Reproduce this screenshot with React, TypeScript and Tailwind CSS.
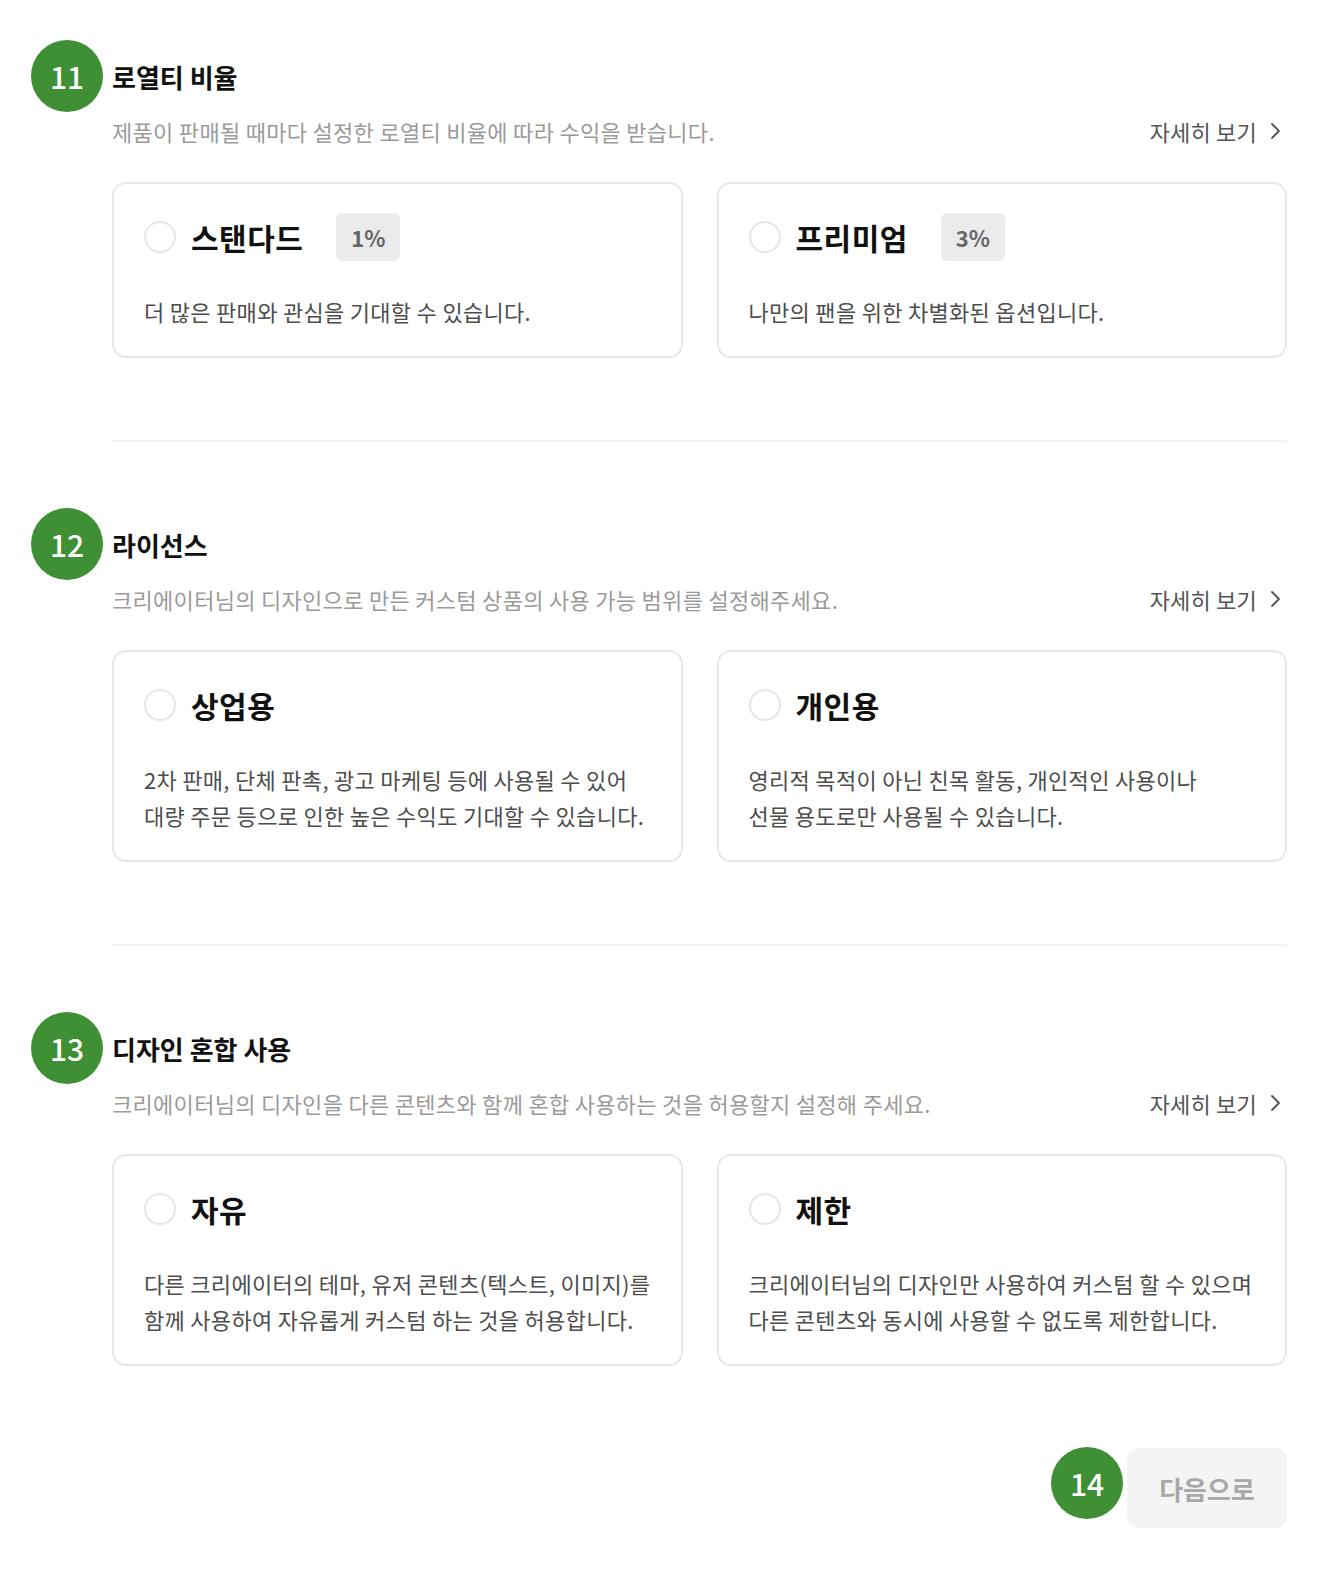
import React, { useState } from 'react';

type Option = {
  id: string;
  title: string;
  badge?: string;
  desc: string[];
};

type Section = {
  no: number;
  title: string;
  subtitle: string;
  options: Option[];
};

const sections: Section[] = [
  {
    no: 11,
    title: '로열티 비율',
    subtitle: '제품이 판매될 때마다 설정한 로열티 비율에 따라 수익을 받습니다.',
    options: [
      { id: 'standard', title: '스탠다드', badge: '1%', desc: ['더 많은 판매와 관심을 기대할 수 있습니다.'] },
      { id: 'premium', title: '프리미엄', badge: '3%', desc: ['나만의 팬을 위한 차별화된 옵션입니다.'] },
    ],
  },
  {
    no: 12,
    title: '라이선스',
    subtitle: '크리에이터님의 디자인으로 만든 커스텀 상품의 사용 가능 범위를 설정해주세요.',
    options: [
      {
        id: 'commercial',
        title: '상업용',
        desc: ['2차 판매, 단체 판촉, 광고 마케팅 등에 사용될 수 있어', '대량 주문 등으로 인한 높은 수익도 기대할 수 있습니다.'],
      },
      {
        id: 'personal',
        title: '개인용',
        desc: ['영리적 목적이 아닌 친목 활동, 개인적인 사용이나', '선물 용도로만 사용될 수 있습니다.'],
      },
    ],
  },
  {
    no: 13,
    title: '디자인 혼합 사용',
    subtitle: '크리에이터님의 디자인을 다른 콘텐츠와 함께 혼합 사용하는 것을 허용할지 설정해 주세요.',
    options: [
      {
        id: 'free',
        title: '자유',
        desc: ['다른 크리에이터의 테마, 유저 콘텐츠(텍스트, 이미지)를', '함께 사용하여 자유롭게 커스텀 하는 것을 허용합니다.'],
      },
      {
        id: 'limited',
        title: '제한',
        desc: ['크리에이터님의 디자인만 사용하여 커스텀 할 수 있으며', '다른 콘텐츠와 동시에 사용할 수 없도록 제한합니다.'],
      },
    ],
  },
];

function StepBadge({ no }: { no: number }) {
  return (
    <div className="flex h-[72px] w-[72px] items-center justify-center rounded-full bg-[#3f8f35] text-[30px] font-medium text-white">
      {no}
    </div>
  );
}

function OptionCard({ option, selected, onSelect }: { option: Option; selected: boolean; onSelect: () => void }) {
  return (
    <button
      type="button"
      onClick={onSelect}
      className="rounded-[14px] border-2 border-[#e8e8e8] bg-white px-[30px] pt-[29px] pb-[27px] text-left"
    >
      <div className="flex h-[48px] items-center">
        <span
          className={
            selected
              ? 'h-[32px] w-[32px] rounded-full border-[9px] border-[#3f8f35]'
              : 'h-[32px] w-[32px] rounded-full border-2 border-[#e6e6e6]'
          }
        />
        <span className="ml-[15px] text-[30px] font-bold tracking-[0.5px] text-[#111]">{option.title}</span>
        {option.badge && (
          <span className="ml-[33px] flex h-[48px] w-[64px] items-center justify-center rounded-[6px] bg-[#ebebeb] text-[22px] font-semibold text-[#666]">
            {option.badge}
          </span>
        )}
      </div>
      <div className="mt-[32px] text-[22px] leading-[36px] tracking-[0.3px] text-[#4d4d4d]">
        {option.desc.map((line) => (
          <p key={line}>{line}</p>
        ))}
      </div>
    </button>
  );
}

export default function App() {
  const [picked, setPicked] = useState<Record<number, string>>({});

  return (
    <div className="min-h-screen bg-white pl-[112px] pr-[41px] pt-[58px] pb-[44px] font-['Noto_Sans_CJK_KR','Noto_Sans',sans-serif]">
      {sections.map((section, i) => (
        <section key={section.no}>
          {i > 0 && <div className="mt-[82px] mb-[84px] h-[2px] bg-[#f2f2f2]" />}

          {/* title */}
          <div className="relative flex h-[36px] items-center">
            <div className="absolute left-[-81px] top-1/2 -translate-y-1/2">
              <StepBadge no={section.no} />
            </div>
            <h2 className="text-[26px] font-bold text-[#111]">{section.title}</h2>
          </div>

          <div className="mt-[23px] flex h-[28px] items-center justify-between">
            <p className="text-[22px] tracking-[0.3px] text-[#9a9a9a]">{section.subtitle}</p>
            <a href="#" className="flex items-center gap-[13px] text-[22px] tracking-[0.2px] text-[#555]">
              <span>자세히 보기</span>
              <svg width="12" height="20" viewBox="0 0 12 20" fill="none" className="mr-[5px]">
                <path d="M2 3l7 7-7 7" stroke="#555" strokeWidth="1.8" strokeLinecap="round" strokeLinejoin="round" />
              </svg>
            </a>
          </div>

          <div className="mt-[37px] grid grid-cols-2 gap-[34px]">
            {section.options.map((opt) => (
              <OptionCard
                key={opt.id}
                option={opt}
                selected={picked[section.no] === opt.id}
                onSelect={() => setPicked({ ...picked, [section.no]: opt.id })}
              />
            ))}
          </div>
        </section>
      ))}

      <div className="mt-[82px] flex justify-end">
        <div className="relative">
          <div className="absolute left-[-76px] top-[-1px]">
            <StepBadge no={14} />
          </div>
          <button
            type="button"
            disabled
            className="flex h-[80px] w-[160px] items-center justify-center rounded-[12px] bg-[#f4f4f4] text-[26px] font-bold text-[#a8a8a8]"
          >
            다음으로
          </button>
        </div>
      </div>
    </div>
  );
}
